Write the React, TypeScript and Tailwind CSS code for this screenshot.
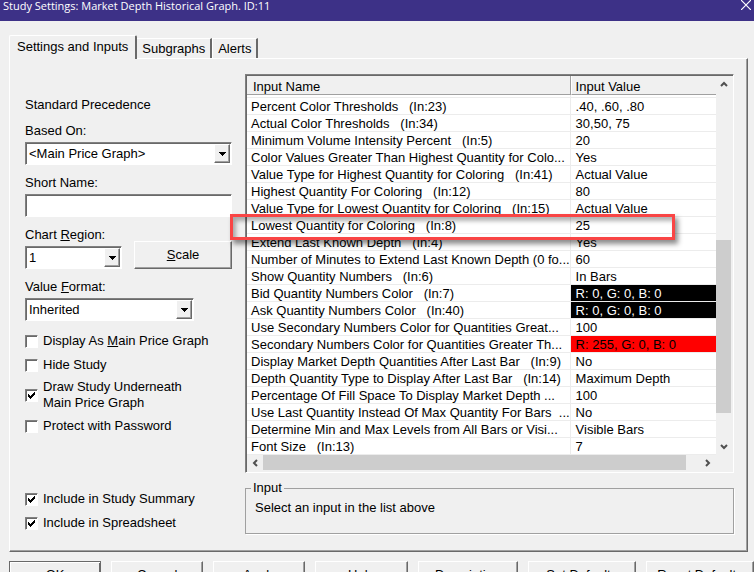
import React, { useState } from "react";
import clsx from "clsx";

type InputRow = {
  name: string;
  value: string;
  valueClass?: string;
  highlighted?: boolean;
};

const rows: InputRow[] = [
  { name: "Percent Color Thresholds   (In:23)", value: ".40, .60, .80" },
  { name: "Actual Color Thresholds   (In:34)", value: "30,50, 75" },
  { name: "Minimum Volume Intensity Percent   (In:5)", value: "20" },
  { name: "Color Values Greater Than Highest Quantity for Colo...", value: "Yes" },
  { name: "Value Type for Highest Quantity for Coloring   (In:41)", value: "Actual Value" },
  { name: "Highest Quantity For Coloring   (In:12)", value: "80" },
  { name: "Value Type for Lowest Quantity for Coloring   (In:15)", value: "Actual Value" },
  { name: "Lowest Quantity for Coloring   (In:8)", value: "25", highlighted: true },
  { name: "Extend Last Known Depth   (In:4)", value: "Yes" },
  { name: "Number of Minutes to Extend Last Known Depth (0 fo...", value: "60" },
  { name: "Show Quantity Numbers   (In:6)", value: "In Bars" },
  { name: "Bid Quantity Numbers Color   (In:7)", value: "R: 0, G: 0, B: 0", valueClass: "bg-black text-white" },
  { name: "Ask Quantity Numbers Color   (In:40)", value: "R: 0, G: 0, B: 0", valueClass: "bg-black text-white" },
  { name: "Use Secondary Numbers Color for Quantities Great...", value: "100" },
  { name: "Secondary Numbers Color for Quantities Greater Th...", value: "R: 255, G: 0, B: 0", valueClass: "bg-[#ff0000] text-black" },
  { name: "Display Market Depth Quantities After Last Bar   (In:9)", value: "No" },
  { name: "Depth Quantity Type to Display After Last Bar   (In:14)", value: "Maximum Depth" },
  { name: "Percentage Of Fill Space To Display Market Depth ...", value: "100" },
  { name: "Use Last Quantity Instead Of Max Quantity For Bars  ...", value: "No" },
  { name: "Determine Min and Max Levels from All Bars or Visi...", value: "Visible Bars" },
  { name: "Font Size   (In:13)", value: "7" },
];

const sunken =
  "border border-t-[#808080] border-l-[#808080] border-r-white border-b-white shadow-[inset_1px_1px_0_#696969]";

const raised =
  "border border-t-white border-l-white border-r-[#696969] border-b-[#696969] shadow-[inset_-1px_-1px_0_#a0a0a0]";

// default push button: dark frame around the raised edge
const raisedDefault =
  "border border-[#696969] shadow-[inset_1px_1px_0_white,inset_-1px_-1px_0_#696969]";

type SelectProps = {
  id: string;
  options: string[];
  className?: string;
};

const ClassicSelect = ({ id, options, className }: SelectProps) => (
  <div className={clsx("relative", className)}>
    <select
      id={id}
      className={clsx("block h-[23px] w-full appearance-none rounded-none bg-white pt-px pl-[3px] outline-none", sunken)}
    >
      {options.map((option) => (
        <option key={option}>{option}</option>
      ))}
    </select>
    <span
      className={clsx(
        "pointer-events-none absolute top-0.5 right-0.5 bottom-0.5 flex w-4 items-center justify-center bg-[#f0f0f0]",
        raised
      )}
    >
      <svg width="7" height="4" viewBox="0 0 7 4" shapeRendering="crispEdges">
        <path d="M0 0h7v1H6v1H5v1H4v1H3V3H2V2H1V1H0z" />
      </svg>
    </span>
  </div>
);

type CheckProps = {
  className?: string;
  defaultChecked?: boolean;
  children: React.ReactNode;
};

const ClassicCheckbox = ({ className, defaultChecked = false, children }: CheckProps) => {
  const [checked, setChecked] = useState(defaultChecked);

  return (
    <label className={clsx("flex items-center gap-[5px]", className)}>
      <span className="relative block size-[13px] shrink-0">
        <input
          type="checkbox"
          checked={checked}
          onChange={() => setChecked(!checked)}
          className={clsx("block size-[13px] appearance-none bg-white", sunken)}
        />
        {checked && (
          <svg
            className="pointer-events-none absolute top-[3px] left-[3px]"
            width="7"
            height="7"
            viewBox="0 0 7 7"
            shapeRendering="crispEdges"
          >
            <path d="M0 2h1v1h1v1h1V3h1V2h1V1h1V0h1v3H6v1H5v1H4v1H3v1H2V6H1V5H0z" />
          </svg>
        )}
      </span>
      <span>{children}</span>
    </label>
  );
};

type ArrowProps = {
  d: string;
  label: string;
  className?: string;
};

const ScrollArrow = ({ d, label, className }: ArrowProps) => (
  <button aria-label={label} className={clsx("flex size-4 shrink-0 items-center justify-center", className)}>
    <svg width="8" height="8" viewBox="0 0 8 8" fill="none" stroke="#505050" strokeWidth="2">
      <path d={d} />
    </svg>
  </button>
);

const InputList = () => (
  <div className={clsx("bg-[#f0f0f0] p-px", sunken)}>
    <div className="flex">
      <table className="w-full table-fixed border-separate border-spacing-0 bg-white leading-[15px] whitespace-pre">
        <colgroup>
          <col className="w-[69%]" />
          <col className="w-[31%]" />
        </colgroup>
        <thead>
          <tr className="h-[19px] bg-[#f0f0f0] text-left">
            <th className="border-r border-b border-[#a0a0a0] p-0 pt-0.5 pl-1.5 font-normal">Input Name</th>
            <th className="border-b border-l border-b-[#a0a0a0] border-l-white p-0 pt-0.5 pl-1 font-normal">
              Input Value
            </th>
          </tr>
        </thead>
        <tbody>
          <tr className="h-[3px]">
            <td className="border-r border-b border-[#ececec] p-0"></td>
            <td className="border-b border-[#ececec] p-0"></td>
          </tr>
          {rows.map((row) => (
            <tr key={row.name} className="relative h-[17px]">
              <td className="border-r border-b border-[#ececec] p-0 pt-px pl-1">
                {row.name}
                {row.highlighted && (
                  <span className="pointer-events-none absolute -top-[3px] right-[41px] -bottom-1.5 -left-[17px] z-10 border-[3px] border-[#f94545] shadow-[3px_4px_5px_rgba(0,0,0,0.45),inset_3px_4px_4px_rgba(0,0,0,0.3)]" />
                )}
              </td>
              <td className={clsx("border-b border-[#ececec] bg-clip-padding p-0 pt-px pl-[5px]", row.valueClass)}>
                {row.value}
              </td>
            </tr>
          ))}
        </tbody>
      </table>
      <div className="flex w-4 shrink-0 flex-col">
        <ScrollArrow label="Scroll up" d="M1 6l3-3 3 3" />
        <div className="grow-[148]"></div>
        <div className="mr-px grow-[173] bg-[#cdcdcd]"></div>
        <div className="grow-[26]"></div>
        <ScrollArrow label="Scroll down" d="M1 2l3 3 3-3" />
      </div>
    </div>
    <div className="flex pr-4">
      <ScrollArrow label="Scroll left" d="M6 1L3 4l3 3" />
      <div className="mb-px grow-[422] bg-[#cdcdcd]"></div>
      <div className="grow-[14]"></div>
      <ScrollArrow label="Scroll right" d="M2 1l3 3-3 3" />
    </div>
  </div>
);

const buttons = ["OK", "Cancel", "Apply", "Help", "Description", "Set Defaults", "Reset Defaults"];

const App = () => {
  const [shortName, setShortName] = useState("");

  return (
    <div className="h-screen overflow-hidden bg-[#f0f0f0] font-['Liberation_Sans',Arial,sans-serif] text-[13px] leading-4 text-black">
      <header className="flex h-[21px] items-start justify-between bg-[#3d3187] pl-[3px] text-white">
        <h1 className="font-['Open_Sans','Noto_Sans',sans-serif] text-[11px] leading-3">
          Study Settings: Market Depth Historical Graph. ID:11
        </h1>
        <button aria-label="Close" className="pr-[3px]">
          <svg width="10" height="10" viewBox="0 0 10 10" fill="none" stroke="white" strokeWidth="1.2">
            <path d="M0 0l10 10M10 0L0 10" />
          </svg>
        </button>
      </header>

      <main className="pt-3.5 pl-[9px]">
        <div role="tablist" className="flex items-end">
          <button
            role="tab"
            aria-selected="true"
            className="relative -mb-px h-6 rounded-t-[2px] border-t border-r-2 border-l border-t-white border-r-[#696969] border-l-white bg-[#f0f0f0] px-[7px] pb-0.5"
          >
            Settings and Inputs
          </button>
          <button
            role="tab"
            aria-selected="false"
            className="h-5 border-t border-r-2 border-t-white border-r-[#696969] px-[5px]"
          >
            Subgraphs
          </button>
          <button
            role="tab"
            aria-selected="false"
            className="h-5 border-t border-r-2 border-l border-t-white border-r-[#696969] border-l-white px-[5px]"
          >
            Alerts
          </button>
        </div>

        <section
          className={clsx("mr-[6px] flex gap-[13px] pt-[15px] pr-[13px] pb-[17px] pl-[15px]", raised)}
        >
          <div className="w-[207px] shrink-0">
            <p className="mt-[23px]">Standard Precedence</p>
            <label htmlFor="based-on" className="mt-2.5 mb-[3px] block">
              Based On:
            </label>
            <ClassicSelect id="based-on" options={["<Main Price Graph>"]} />
            <label htmlFor="short-name" className="mt-2.5 mb-[3px] block">
              Short Name:
            </label>
            <input
              id="short-name"
              type="text"
              value={shortName}
              onChange={(e) => setShortName(e.target.value)}
              className={clsx("block h-[23px] w-full bg-white px-1 outline-none", sunken)}
            />
            <div className="mt-2.5 flex items-end justify-between">
              <div>
                <label htmlFor="chart-region" className="mb-[3px] block">
                  Chart <u>R</u>egion:
                </label>
                <ClassicSelect id="chart-region" options={["1", "2", "3", "4"]} className="w-[97px]" />
              </div>
              <button className={clsx("h-7 w-[98px]", raised)}>
                <u>S</u>cale
              </button>
            </div>
            <label htmlFor="value-format" className="mt-2.5 mb-[3px] block">
              Value <u>F</u>ormat:
            </label>
            <ClassicSelect id="value-format" options={["Inherited"]} className="w-[169px]" />
            <ClassicCheckbox className="mt-3">
              Display As <u>M</u>ain Price Graph
            </ClassicCheckbox>
            <ClassicCheckbox className="mt-2">Hide Study</ClassicCheckbox>
            <ClassicCheckbox className="mt-1.5" defaultChecked>
              Draw Study Underneath
              <br />
              Main Price Graph
            </ClassicCheckbox>
            <ClassicCheckbox className="mt-[7px]">Protect with Password</ClassicCheckbox>
            <ClassicCheckbox className="mt-[57px]" defaultChecked>
              Include in Study Summary
            </ClassicCheckbox>
            <ClassicCheckbox className="mt-2" defaultChecked>
              Include in Spreadsheet
            </ClassicCheckbox>
          </div>

          <div className="min-w-0 flex-1">
            <InputList />
            <fieldset className="mt-[7px] h-[54px] border border-[#a0a0a0] pl-[9px] shadow-[1px_1px_0_white]">
              <legend className="-ml-1 px-0.5">Input</legend>
              <p className="mt-1">Select an input in the list above</p>
            </fieldset>
          </div>
        </section>

        <footer className="mt-[9px] grid grid-cols-[92fr_92fr_92fr_92fr_100fr_108fr_108fr] gap-2.5">
          {buttons.map((label) => (
            <button
              key={label}
              className={clsx("h-7 whitespace-nowrap", label === "OK" ? raisedDefault : raised)}
            >
              {label}
            </button>
          ))}
        </footer>
      </main>
    </div>
  );
};

export default App;
